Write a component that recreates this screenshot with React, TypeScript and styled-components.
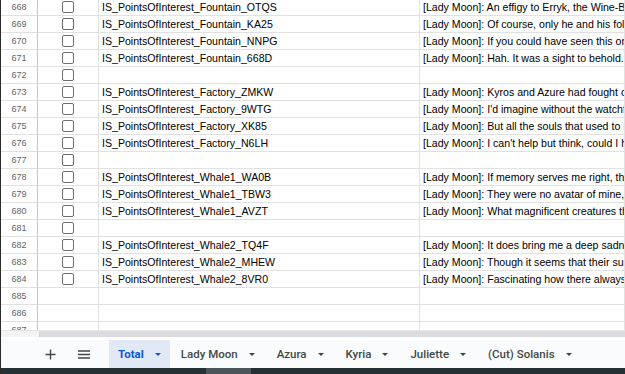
import React from "react";
import styled, {createGlobalStyle} from "styled-components";

const GlobalStyle = createGlobalStyle`
    html, body {
        margin: 0;
        padding: 0;
        overflow: hidden;
        background: #ffffff;
    }
`;

type Row = {
    num: number;
    check: boolean;
    key?: string;
    line?: string;
    accent?: string;
};

const rows: Row[] = [
    {num: 668, check: true, key: "IS_PointsOfInterest_Fountain_OTQS", line: "[Lady Moon]: An effigy to Erryk, the Wine-Bringer, who once blessed these streets."},
    {num: 669, check: true, key: "IS_PointsOfInterest_Fountain_KA25", line: "[Lady Moon]: Of course, only he and his followers would build such a thing."},
    {num: 670, check: true, key: "IS_PointsOfInterest_Fountain_NNPG", line: "[Lady Moon]: If you could have seen this one in its prime..."},
    {num: 671, check: true, key: "IS_PointsOfInterest_Fountain_668D", line: "[Lady Moon]: Hah. It was a sight to behold."},
    {num: 672, check: true},
    {num: 673, check: true, key: "IS_PointsOfInterest_Factory_ZMKW", line: "[Lady Moon]: Kyros and Azure had fought over this place for ages."},
    {num: 674, check: true, key: "IS_PointsOfInterest_Factory_9WTG", line: "[Lady Moon]: I'd imagine without the watchful eye of its makers..."},
    {num: 675, check: true, key: "IS_PointsOfInterest_Factory_XK85", line: "[Lady Moon]: But all the souls that used to ", accent: "roam these halls"},
    {num: 676, check: true, key: "IS_PointsOfInterest_Factory_N6LH", line: "[Lady Moon]: I can't help but think, could I have done more?"},
    {num: 677, check: true},
    {num: 678, check: true, key: "IS_PointsOfInterest_Whale1_WA0B", line: "[Lady Moon]: If memory serves me right, they sang through the night."},
    {num: 679, check: true, key: "IS_PointsOfInterest_Whale1_TBW3", line: "[Lady Moon]: They were no avatar of mine, yet I loved them all the same."},
    {num: 680, check: true, key: "IS_PointsOfInterest_Whale1_AVZT", line: "[Lady Moon]: What magnificent creatures they were."},
    {num: 681, check: true},
    {num: 682, check: true, key: "IS_PointsOfInterest_Whale2_TQ4F", line: "[Lady Moon]: It does bring me a deep sadness to see them like this."},
    {num: 683, check: true, key: "IS_PointsOfInterest_Whale2_MHEW", line: "[Lady Moon]: Though it seems that their survival was never in doubt."},
    {num: 684, check: true, key: "IS_PointsOfInterest_Whale2_8VR0", line: "[Lady Moon]: Fascinating how there always seems to be a way."},
    {num: 685, check: false},
    {num: 686, check: false},
    {num: 687, check: false},
];

const tabs = ["Total", "Lady Moon", "Azura", "Kyria", "Juliette", "(Cut) Solanis"];

const Page = styled.div`
    width: 625px;
    height: 374px;
    display: flex;
    flex-direction: column;
    overflow: hidden;
    box-sizing: border-box;
    border-left: 1px solid #2b2b2b;
    font-family: "Liberation Sans", Arial, sans-serif;
`;

const GridArea = styled.div`
    height: 330px;
    overflow: hidden;
    flex-shrink: 0;
`;

const Grid = styled.div`
    margin-top: -1px;
    display: grid;
    grid-template-columns: 37px 61px 321px 1fr;
    grid-auto-rows: 17px;
`;

const Cell = styled.div`
    box-sizing: border-box;
    border-right: 1px solid #e1e1e1;
    border-bottom: 1px solid #e1e1e1;
    overflow: hidden;
    white-space: nowrap;
    min-width: 0;
`;

const RowNum = styled(Cell)`
    display: flex;
    align-items: center;
    justify-content: center;
    font-size: 9px;
    color: #5f6368;
    border-right-color: #c7c7c7;
`;

const CheckCell = styled(Cell)`
    display: flex;
    align-items: center;
    justify-content: center;
`;

const Box = styled.span`
    width: 12px;
    height: 12px;
    box-sizing: border-box;
    border: 1.5px solid #6f6f6f;
    border-radius: 2px;
    background: #fff;
`;

const TextCell = styled(Cell)`
    padding-left: 3px;
    font-size: 10.6px;
    line-height: 16px;
    color: #000;
`;

const Accent = styled.span`
    color: #e8710a;
`;

const ScrollTrack = styled.div`
    height: 7px;
    display: flex;
    flex-shrink: 0;
    border-top: 1px solid #e6e6e6;
    box-sizing: border-box;
`;

const ScrollCorner = styled.div`
    width: 38px;
    background: #f3f3f3;
    border-right: 1px solid #d4d4d4;
`;

const ScrollThumb = styled.div`
    flex: 1;
    background: #dadce0;
`;

const TabBar = styled.div`
    height: 31px;
    flex-shrink: 0;
    background: #f9fbfd;
    border-top: 3px solid #ffffff;
    box-sizing: border-box;
    display: flex;
    align-items: stretch;
    font-family: Roboto, "Liberation Sans", sans-serif;
`;

const IconButton = styled.div`
    width: 33px;
    display: flex;
    align-items: center;
    justify-content: center;
    color: #444746;
`;

const Spacer = styled.div<{ $w: number }>`
    width: ${p => p.$w}px;
    flex-shrink: 0;
`;

const Tab = styled.div<{ $active?: boolean }>`
    display: flex;
    align-items: center;
    gap: 8px;
    padding: ${p => p.$active ? "0 9px 0 9px" : "0 11px 0 11px"};
    font-size: 11.5px;
    font-weight: ${p => p.$active ? 700 : 500};
    color: ${p => p.$active ? "#0b57d0" : "#444746"};
    background: ${p => p.$active ? "#e1e9f7" : "transparent"};
    white-space: nowrap;
`;

const Caret = styled.span<{ $active?: boolean }>`
    width: 0;
    height: 0;
    border-left: 3.5px solid transparent;
    border-right: 3.5px solid transparent;
    border-top: 3.5px solid ${p => p.$active ? "#0b57d0" : "#444746"};
    margin-left: 3px;
`;

const Taskbar = styled.div`
    height: 6px;
    flex-shrink: 0;
    background: #253034;
    display: flex;
`;

const TaskItem = styled.div`
    margin-left: 205px;
    width: 45px;
    background: #4c565a;
`;

const App: React.FC = () => {
    return (
        <>
            <GlobalStyle/>
            <Page>
                <GridArea>
                    <Grid>
                        {rows.map(r => (
                            <React.Fragment key={r.num}>
                                <RowNum>{r.num}</RowNum>
                                <CheckCell>{r.check && <Box/>}</CheckCell>
                                <TextCell>{r.key}</TextCell>
                                <TextCell>
                                    {r.line}
                                    {r.accent && <Accent>{r.accent}</Accent>}
                                </TextCell>
                            </React.Fragment>
                        ))}
                    </Grid>
                </GridArea>
                <ScrollTrack>
                    <ScrollCorner/>
                    <ScrollThumb/>
                </ScrollTrack>
                <TabBar>
                    <Spacer $w={33}/>
                    <IconButton>
                        <svg width="11" height="11" viewBox="0 0 11 11">
                            <path d="M5.5 0.5v10M0.5 5.5h10" stroke="#444746" strokeWidth="1.4"/>
                        </svg>
                    </IconButton>
                    <IconButton>
                        <svg width="12" height="9" viewBox="0 0 12 9">
                            <path d="M0 1h12M0 4.5h12M0 8h12" stroke="#444746" strokeWidth="1.3"/>
                        </svg>
                    </IconButton>
                    <Spacer $w={9}/>
                    {tabs.map((t, i) => (
                        <Tab key={t} $active={i === 0}>
                            {t}
                            <Caret $active={i === 0}/>
                        </Tab>
                    ))}
                </TabBar>
                <Taskbar>
                    <TaskItem/>
                </Taskbar>
            </Page>
        </>
    );
};

export default App;
